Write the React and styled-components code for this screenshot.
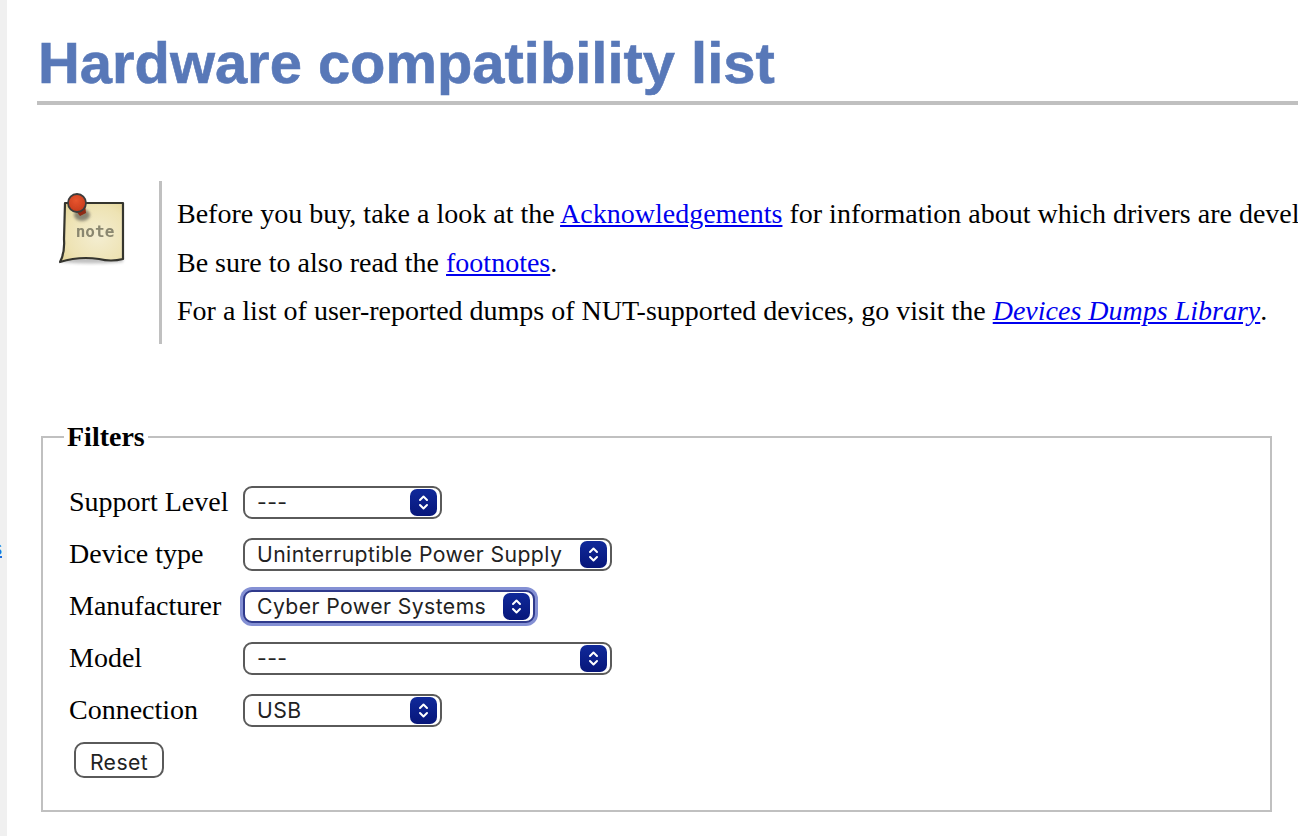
import React from "react";
import styled, { createGlobalStyle } from "styled-components";

const Global = createGlobalStyle`
  html, body {
    margin: 0;
    height: 100%;
    overflow: hidden;
    background: white;
  }
  #root {
    height: 100%;
  }
`;

const Page = styled.div`
  display: flex;
  height: 836px;
  overflow: hidden;
  font-family: "Liberation Serif", "Times New Roman", serif;
  font-size: 28px;
  color: black;
`;

const Sidebar = styled.nav`
  position: relative;
  flex: 0 0 7px;
  background: #f0f0f0;
  overflow: hidden;
`;

const SideLink = styled.a`
  position: absolute;
  top: 537px;
  right: 5px;
  font-family: "Liberation Sans", Arial, sans-serif;
  font-size: 20px;
  color: #1a6fe0;
  white-space: nowrap;
`;

const Main = styled.main`
  flex: 1;
  min-width: 0;
  padding-left: 30px;
`;

const Title = styled.h1`
  margin: 0;
  height: 105px;
  box-sizing: border-box;
  padding: 28px 0 0 1px;
  font-family: "Liberation Sans", Arial, sans-serif;
  font-size: 57.9px;
  line-height: 70px;
  font-weight: bold;
  color: #5878b8;
  -webkit-text-stroke: 0.6px #5878b8;
  border-bottom: 4px solid #c0c0c0;
  white-space: nowrap;
`;

const Note = styled.div`
  display: flex;
  margin-top: 76px;
  height: 163px;
`;

const NoteIcon = styled.div`
  flex: 0 0 122px;
  padding: 10px 0 0 22px;
  box-sizing: border-box;
`;

const NoteBody = styled.div`
  border-left: 3px solid #c0c0c0;
  padding-left: 15px;
  padding-top: 9px;
  white-space: nowrap;
`;

const NoteLine = styled.p`
  margin: 0;
  height: 48.5px;
  line-height: 48px;
`;

const FilterBox = styled.fieldset`
  margin: 78px 26px 0 4px;
  padding: 24px 0 0 26px;
  height: 390px;
  box-sizing: border-box;
  border: 2px solid #c0c0c0;
`;

const Legend = styled.legend`
  margin-left: -5px;
  padding: 0 3px;
  font-weight: bold;
  line-height: 30px;
`;

const Rows = styled.div`
  display: grid;
  grid-template-columns: 174px 1fr;
  grid-auto-rows: 52px;
  align-items: center;
`;

const Label = styled.label`
  line-height: 32px;
`;

const Select = styled.div`
  display: flex;
  align-items: center;
  justify-content: space-between;
  box-sizing: border-box;
  width: ${(p) => p.$width}px;
  height: 33px;
  padding: 0 3px 0 12px;
  font-family: Inter, "Liberation Sans", sans-serif;
  font-size: 21.2px;
  letter-spacing: 0.42px;
  color: #222;
  background: white;
  border: 2px solid #5a5a5a;
  border-radius: 9px;
  ${(p) =>
    p.$focused &&
    `
    border-color: #2f3a8c;
    box-shadow: 0 0 0 3px #8490d4;
  `}
`;

const Stepper = styled.span`
  display: flex;
  align-items: center;
  justify-content: center;
  flex: 0 0 27px;
  height: 27px;
  border-radius: 7px;
  background: linear-gradient(#10299a, #07167a);
`;

const ResetButton = styled.button`
  display: block;
  margin: 6px 0 0 5px;
  width: 90px;
  height: 36px;
  padding: 3px 0 0;
  font-family: Inter, "Liberation Sans", sans-serif;
  font-size: 21.2px;
  letter-spacing: 0.42px;
  color: #222;
  background: white;
  border: 2px solid #5a5a5a;
  border-radius: 10px;
`;

const DocLink = styled.a`
  color: #0000ee;
  text-decoration: underline;
`;

const Chevrons = () => (
  <svg width="13" height="19" viewBox="0 0 13 19" fill="none">
    <path d="M3 7 L6.5 3.5 L10 7" stroke="white" strokeWidth="2" strokeLinecap="round" strokeLinejoin="round" />
    <path d="M3 12 L6.5 15.5 L10 12" stroke="white" strokeWidth="2" strokeLinecap="round" strokeLinejoin="round" />
  </svg>
);

const NoteGlyph = () => (
  <svg width="68" height="78" viewBox="0 0 68 78">
    <defs>
      <radialGradient id="paper" cx="0.6" cy="0.55" r="0.75">
        <stop offset="0" stopColor="#f4eed2" />
        <stop offset="0.65" stopColor="#eee3b4" />
        <stop offset="1" stopColor="#e2d494" />
      </radialGradient>
      <radialGradient id="pin" cx="0.45" cy="0.35" r="0.7">
        <stop offset="0" stopColor="#e8552e" />
        <stop offset="1" stopColor="#c4391a" />
      </radialGradient>
      <filter id="soft" x="-30%" y="-30%" width="160%" height="160%">
        <feGaussianBlur stdDeviation="1.8" />
      </filter>
      <filter id="tiny" x="-10%" y="-10%" width="120%" height="120%">
        <feGaussianBlur stdDeviation="0.55" />
      </filter>
    </defs>
    <path d="M2 71 Q30 74 64 71 L64 66 L5 66 Z" fill="#777" opacity="0.45" filter="url(#soft)" />
    <g filter="url(#tiny)">
      <path
        d="M6 12 L64 12 L64 68 Q52 71 40 68 Q20 65 1 71 Q6 62 5 48 Z"
        fill="url(#paper)"
        stroke="#35352f"
        strokeWidth="2.2"
        strokeLinejoin="round"
      />
      <ellipse cx="23" cy="24" rx="8" ry="6" fill="#444" opacity="0.6" filter="url(#soft)" />
      <path d="M13 15 L21 25 L27 22 L26 13 Z" fill="#8f2a12" />
      <circle cx="18" cy="12" r="9" fill="url(#pin)" stroke="#3c3c3c" strokeWidth="1.8" />
      <text
        x="36"
        y="46"
        textAnchor="middle"
        fontFamily="'DejaVu Sans Mono', monospace"
        fontWeight="bold"
        fontSize="16"
        fill="#8a876f"
      >
        note
      </text>
    </g>
  </svg>
);

const filters = [
  { label: "Support Level", value: "---", width: 199 },
  { label: "Device type", value: "Uninterruptible Power Supply", width: 369 },
  { label: "Manufacturer", value: "Cyber Power Systems", width: 292, focused: true },
  { label: "Model", value: "---", width: 369 },
  { label: "Connection", value: "USB", width: 199 },
];

const App = () => {
  return (
    <Page>
      <Global />
      <Sidebar>
        <SideLink href="#">s</SideLink>
      </Sidebar>
      <Main>
        <Title>Hardware compatibility list</Title>
        <Note>
          <NoteIcon>
            <NoteGlyph />
          </NoteIcon>
          <NoteBody>
            <NoteLine>
              Before you buy, take a look at the <DocLink href="#">Acknowledgements</DocLink> for information about
              which drivers are developed with vendor support.
            </NoteLine>
            <NoteLine>
              Be sure to also read the <DocLink href="#">footnotes</DocLink>.
            </NoteLine>
            <NoteLine>
              For a list of user-reported dumps of NUT-supported devices, go visit the{" "}
              <DocLink href="#">
                <em>Devices Dumps Library</em>
              </DocLink>
              .
            </NoteLine>
          </NoteBody>
        </Note>
        <FilterBox>
          <Legend>Filters</Legend>
          <Rows>
            {filters.map((f) => (
              <React.Fragment key={f.label}>
                <Label>{f.label}</Label>
                <Select $width={f.width} $focused={f.focused}>
                  <span>{f.value}</span>
                  <Stepper>
                    <Chevrons />
                  </Stepper>
                </Select>
              </React.Fragment>
            ))}
          </Rows>
          <ResetButton>Reset</ResetButton>
        </FilterBox>
      </Main>
    </Page>
  );
};

export default App;
